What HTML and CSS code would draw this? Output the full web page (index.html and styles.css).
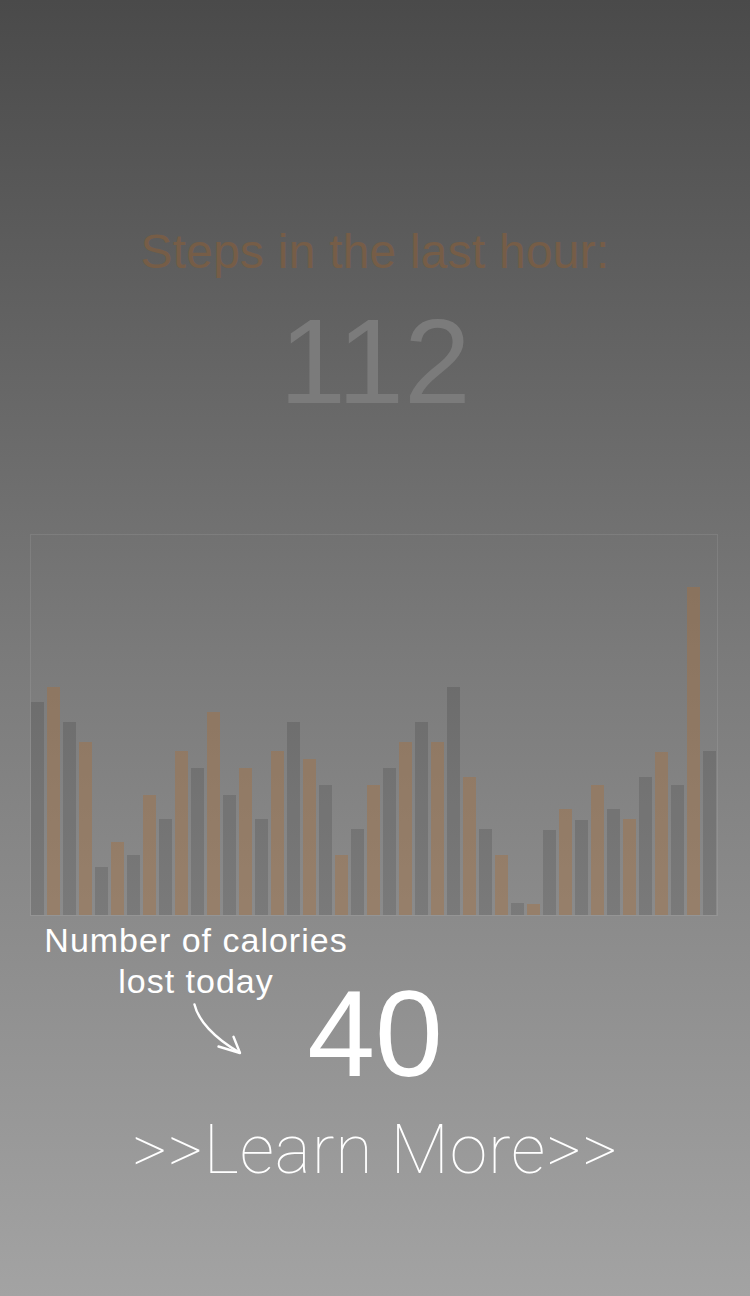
FILE: index.html
```html
<!DOCTYPE html>
<html>
<head>
<meta charset="utf-8">
<link rel="stylesheet" href="styles.css">
</head>
<body>
<main class="screen">
  <h1 class="steps-title">Steps in the last hour:</h1>
  <div class="steps-value">112</div>
  <div class="chart">
    <div class="bar gray" style="height:213px"></div>
    <div class="bar orange" style="height:228px"></div>
    <div class="bar gray" style="height:193px"></div>
    <div class="bar orange" style="height:173px"></div>
    <div class="bar gray" style="height:48px"></div>
    <div class="bar orange" style="height:73px"></div>
    <div class="bar gray" style="height:60px"></div>
    <div class="bar orange" style="height:120px"></div>
    <div class="bar gray" style="height:96px"></div>
    <div class="bar orange" style="height:164px"></div>
    <div class="bar gray" style="height:147px"></div>
    <div class="bar orange" style="height:203px"></div>
    <div class="bar gray" style="height:120px"></div>
    <div class="bar orange" style="height:147px"></div>
    <div class="bar gray" style="height:96px"></div>
    <div class="bar orange" style="height:164px"></div>
    <div class="bar gray" style="height:193px"></div>
    <div class="bar orange" style="height:156px"></div>
    <div class="bar gray" style="height:130px"></div>
    <div class="bar orange" style="height:60px"></div>
    <div class="bar gray" style="height:86px"></div>
    <div class="bar orange" style="height:130px"></div>
    <div class="bar gray" style="height:147px"></div>
    <div class="bar orange" style="height:173px"></div>
    <div class="bar gray" style="height:193px"></div>
    <div class="bar orange" style="height:173px"></div>
    <div class="bar gray" style="height:228px"></div>
    <div class="bar orange" style="height:138px"></div>
    <div class="bar gray" style="height:86px"></div>
    <div class="bar orange" style="height:60px"></div>
    <div class="bar gray" style="height:12px"></div>
    <div class="bar orange" style="height:11px"></div>
    <div class="bar gray" style="height:85px"></div>
    <div class="bar orange" style="height:106px"></div>
    <div class="bar gray" style="height:95px"></div>
    <div class="bar orange" style="height:130px"></div>
    <div class="bar gray" style="height:106px"></div>
    <div class="bar orange" style="height:96px"></div>
    <div class="bar gray" style="height:138px"></div>
    <div class="bar orange" style="height:163px"></div>
    <div class="bar gray" style="height:130px"></div>
    <div class="bar orange" style="height:328px"></div>
    <div class="bar gray" style="height:164px"></div>
  </div>
  <section class="calories">
    <p class="calories-label">Number of calories<br>lost today</p>
    <svg class="calories-arrow" width="60" height="60" viewBox="0 0 60 60" aria-hidden="true">
      <path d="M4.5 4.5 C 8 20, 24 38, 49.5 52.5" fill="none" stroke="#fff" stroke-width="2.4" stroke-linecap="round"/>
      <path d="M28.5 46.5 L50 53 L43.5 36.8" fill="none" stroke="#fff" stroke-width="2.4" stroke-linecap="round" stroke-linejoin="round"/>
    </svg>
    <div class="calories-value">40</div>
  </section>
  <a class="learn-more" href="#">&gt;&gt;Learn More&gt;&gt;</a>
</main>
</body>
</html>
```

FILE: styles.css
```css
html, body {
  margin: 0;
  padding: 0;
}

body {
  width: 750px;
  height: 1296px;
  overflow: hidden;
  background: linear-gradient(to bottom, #4a4a4a 0%, #7a7a7a 50%, #a3a3a3 100%);
  font-family: "Liberation Sans", Arial, sans-serif;
}

.screen {
  display: flex;
  flex-direction: column;
  align-items: center;
  padding-top: 228px;
}

.steps-title {
  margin: 0;
  font-size: 48px;
  line-height: 48px;
  font-weight: 400;
  letter-spacing: 0.2px;
  color: #765d47;
}

.steps-value {
  margin-top: 25px;
  font-size: 120px;
  line-height: 120px;
  color: #7b7b7b;
}

.chart {
  box-sizing: border-box;
  margin-top: 113px;
  align-self: flex-start;
  margin-left: 30px;
  width: 688px;
  height: 382px;
  border: 1px solid rgba(255, 255, 255, 0.09);
  display: flex;
  align-items: flex-end;
  gap: 3px;
}

.bar {
  width: 13px;
  flex: none;
}

.bar.gray {
  background: rgba(0, 0, 0, 0.12);
}

.bar.orange {
  background: rgba(168, 113, 63, 0.42);
}

.calories {
  align-self: stretch;
  display: grid;
  grid-template-columns: 1fr;
  grid-template-rows: auto;
  margin-top: 4px;
  height: 196px;
}

.calories > * {
  grid-area: 1 / 1;
}

.calories-label {
  margin: 0 0 0 44px;
  justify-self: start;
  align-self: start;
  width: 304px;
  text-align: center;
  font-size: 34px;
  line-height: 41px;
  letter-spacing: 1px;
  color: #ffffff;
}

.calories-arrow {
  justify-self: start;
  align-self: start;
  margin: 80px 0 0 190px;
}

.calories-value {
  justify-self: center;
  align-self: start;
  margin-top: 53px;
  font-size: 122px;
  line-height: 122px;
  color: #ffffff;
}

.learn-more {
  font-family: Roboto, "Liberation Sans", sans-serif;
  font-weight: 100;
  font-size: 68px;
  line-height: 68px;
  letter-spacing: 0.9px;
  color: #ffffff;
  text-decoration: none;
}
```
